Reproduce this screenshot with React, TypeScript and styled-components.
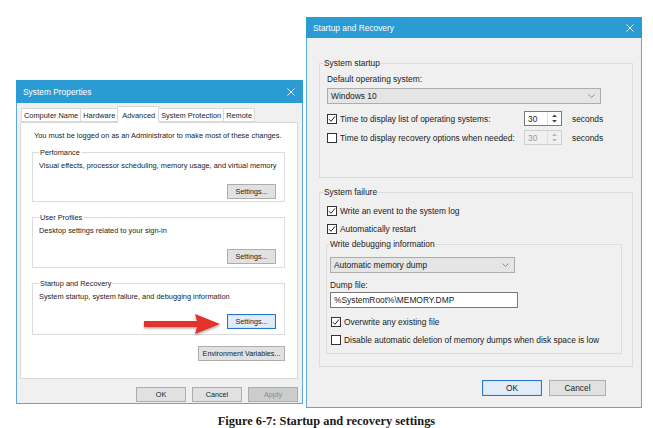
import { createGlobalStyle, styled } from 'styled-components';

const GlobalStyle = createGlobalStyle`
  html, body {
    margin: 0;
    padding: 0;
    background: #fff;
  }
  #root {
    width: 653px;
    height: 428px;
    overflow: hidden;
  }
`;

const Page = styled.div`
  width: 653px;
  height: 428px;
  display: flex;
  flex-direction: column;
  font-family: 'Liberation Sans', Arial, sans-serif;
  color: #1b1b1b;
`;

const Windows = styled.div`
  display: flex;
  align-items: flex-start;
  gap: 3px;
  padding: 17px 0 0 16px;
  height: 392px;
`;

const Window = styled.div<{ $w: number; $h: number; $top?: number }>`
  position: relative;
  box-sizing: border-box;
  width: ${(p) => p.$w}px;
  height: ${(p) => p.$h}px;
  margin-top: ${(p) => p.$top ?? 0}px;
  border: 1px solid #5aa9dc;
  border-top: none;
  background: #f0f0f0;
  display: flex;
  flex-direction: column;
`;

const TitleBar = styled.div<{ $h: number }>`
  height: ${(p) => p.$h}px;
  flex: none;
  margin: 0 -1px;
  background: #2a9bd3;
  color: #fff;
  display: flex;
  align-items: center;
  justify-content: space-between;
  padding: 0 8px 0 7px;
  font-size: 8.4px;
`;

const CloseIcon = () => (
  <svg width="8" height="8" viewBox="0 0 8 8">
    <path d="M0.5 0.5 L7.5 7.5 M7.5 0.5 L0.5 7.5" stroke="#fff" strokeWidth="1" />
  </svg>
);

/* ---------- left dialog ---------- */

const LeftBody = styled.div`
  flex: 1;
  display: flex;
  flex-direction: column;
  padding: 2px 4px 0 3px;
  font-size: 7.4px;
`;

const TabStrip = styled.div`
  display: flex;
  align-items: flex-end;
  height: 17px;
  padding-left: 1px;
  position: relative;
  z-index: 1;
`;

const Tab = styled.div<{ $active?: boolean }>`
  height: ${(p) => (p.$active ? 17 : 14)}px;
  box-sizing: border-box;
  padding: 0 ${(p) => (p.$active ? 4 : 2)}px;
  margin: 0 ${(p) => (p.$active ? -1 : 0)}px ${(p) => (p.$active ? -1 : 0)}px;
  border: 1px solid #d9d9d9;
  border-bottom: ${(p) => (p.$active ? 'none' : '1px solid #d9d9d9')};
  margin-left: -1px;
  background: #fff;
  display: flex;
  align-items: center;
  white-space: nowrap;
  color: #222;
  &:first-child {
    margin-left: 0;
  }
`;

const TabPanel = styled.div`
  height: 257px;
  box-sizing: border-box;
  background: #fff;
  border: 1px solid #d9d9d9;
  padding: 0 12px 0 11px;
  display: flex;
  flex-direction: column;
  position: relative;
`;

const Note = styled.div`
  margin: 8px 0 8px 2px;
  line-height: 9px;
  white-space: nowrap;
`;

const Group = styled.fieldset<{ $h: number; $mt?: number }>`
  box-sizing: border-box;
  height: ${(p) => p.$h}px;
  margin: ${(p) => p.$mt ?? 0}px 0 0;
  padding: 4px 8px 0 6px;
  border: 1px solid #dcdcdc;
  min-width: 0;
  display: flex;
  flex-direction: column;
`;

const Legend = styled.legend`
  padding: 0 1px;
  line-height: 9px;
  color: #222;
`;

const Desc = styled.div`
  line-height: 9px;
  white-space: nowrap;
`;

const ButtonRow = styled.div<{ $mt?: number }>`
  display: flex;
  justify-content: flex-end;
  gap: 6px;
  margin-top: ${(p) => p.$mt ?? 0}px;
`;

const Button = styled.div<{ $w: number; $h?: number; $focus?: boolean; $disabled?: boolean; $fs?: number }>`
  width: ${(p) => p.$w}px;
  height: ${(p) => p.$h ?? 15}px;
  box-sizing: border-box;
  border: 1px solid ${(p) => (p.$focus ? '#2a74c9' : '#adadad')};
  box-shadow: ${(p) => (p.$focus ? 'inset 0 0 0 1px #cfe3f7' : 'none')};
  background: ${(p) => (p.$disabled ? '#cccccc' : p.$focus ? '#e1ecf8' : '#e1e1e1')};
  color: ${(p) => (p.$disabled ? '#8a8a8a' : '#1b1b1b')};
  font-size: ${(p) => p.$fs ?? 7.2}px;
  display: flex;
  align-items: center;
  justify-content: center;
  white-space: nowrap;
`;

const BottomRow = styled.div`
  display: flex;
  justify-content: flex-end;
  gap: 6px;
  margin-top: 8px;
`;

const ArrowMark = styled.svg`
  position: absolute;
  left: 121px;
  top: 189px;
`;

const RedArrow = () => (
  <ArrowMark width="82" height="24" viewBox="0 0 82 24">
    <defs>
      <filter id="sh" x="-10%" y="-30%" width="120%" height="160%">
        <feDropShadow dx="0" dy="1.5" stdDeviation="1.2" floodColor="#000" floodOpacity="0.35" />
      </filter>
    </defs>
    <path
      d="M2 9 L55 9 L53 2 L78 12 L53 22 L55 15 L2 15 Z"
      fill="#e3302b"
      filter="url(#sh)"
    />
  </ArrowMark>
);

/* ---------- right dialog ---------- */

const RightBody = styled.div`
  flex: 1;
  display: flex;
  flex-direction: column;
  padding: 20px 8px 0 12px;
  font-size: 8.4px;
`;

const RGroup = styled.fieldset<{ $h: number; $mt?: number; $w?: number; $ml?: number; $pl?: number }>`
  box-sizing: border-box;
  height: ${(p) => p.$h}px;
  width: ${(p) => (p.$w ? `${p.$w}px` : 'auto')};
  margin: ${(p) => p.$mt ?? 0}px 0 0 ${(p) => p.$ml ?? 0}px;
  padding: 0 6px 0 ${(p) => p.$pl ?? 7}px;
  border: 1px solid #dcdcdc;
  min-width: 0;
  display: flex;
  flex-direction: column;
`;

const RLegend = styled.legend<{ $ml?: number }>`
  padding: 0 1px 0 0;
  margin-left: ${(p) => p.$ml ?? -3}px;
  line-height: 10px;
  color: #222;
`;

const Label = styled.div<{ $mt?: number }>`
  line-height: 10px;
  margin-top: ${(p) => p.$mt ?? 0}px;
  white-space: nowrap;
`;

const Select = styled.div<{ $w: number; $mt?: number }>`
  width: ${(p) => p.$w}px;
  height: 16px;
  box-sizing: border-box;
  margin-top: ${(p) => p.$mt ?? 0}px;
  border: 1px solid #adadad;
  background: #e5e5e5;
  display: flex;
  align-items: center;
  justify-content: space-between;
  padding: 0 5px 0 3px;
`;

const Chevron = () => (
  <svg width="7" height="4" viewBox="0 0 7 4">
    <path d="M0.5 0.5 L3.5 3.5 L6.5 0.5" stroke="#8a8a8a" fill="none" strokeWidth="1" />
  </svg>
);

const CheckRow = styled.div<{ $mt?: number; $ml?: number }>`
  display: flex;
  align-items: center;
  gap: 3px;
  height: 15px;
  margin: ${(p) => p.$mt ?? 0}px 0 0 ${(p) => p.$ml ?? 0}px;
  white-space: nowrap;
`;

const Box = styled.span`
  width: 10px;
  height: 10px;
  box-sizing: border-box;
  border: 1px solid #333;
  background: #fff;
  flex: none;
  display: flex;
  align-items: center;
  justify-content: center;
`;

const Check = ({ on }: { on?: boolean }) => (
  <Box>
    {on && (
      <svg width="8" height="8" viewBox="0 0 8 8">
        <path d="M1 4.2 L3 6.3 L7 1.4" stroke="#222" strokeWidth="1" fill="none" />
      </svg>
    )}
  </Box>
);

const SpinLabel = styled.span`
  flex: 1;
`;

const Spinner = styled.div<{ $disabled?: boolean }>`
  display: flex;
  align-items: stretch;
  width: 38px;
  height: 15px;
  box-sizing: border-box;
  border: 1px solid ${(p) => (p.$disabled ? '#cfcfcf' : '#7a7a7a')};
  background: ${(p) => (p.$disabled ? '#f0f0f0' : '#fff')};
  color: ${(p) => (p.$disabled ? '#9a9a9a' : '#1b1b1b')};
  margin-right: 7px;
`;

const SpinValue = styled.span`
  flex: 1;
  display: flex;
  align-items: center;
  padding-left: 3px;
`;

const SpinArrows = styled.span`
  width: 13px;
  border-left: 1px solid #e0e0e0;
  display: flex;
  flex-direction: column;
  align-items: center;
  justify-content: center;
`;

const SpinArrowsIcon = ({ color }: { color: string }) => (
  <svg width="5" height="9" viewBox="0 0 5 9">
    <path d="M0 3 L2.5 0.5 L5 3 Z M0 6 L2.5 8.5 L5 6 Z" fill={color} />
  </svg>
);

const Seconds = styled.span`
  width: 54px;
`;

const TextInput = styled.div<{ $w: number }>`
  width: ${(p) => p.$w}px;
  height: 16px;
  box-sizing: border-box;
  border: 1px solid #7a7a7a;
  background: #fff;
  display: flex;
  align-items: center;
  padding-left: 3px;
  margin-top: 2px;
`;

const RButtons = styled.div`
  display: flex;
  justify-content: flex-end;
  gap: 7px;
  margin: 13px 27px 0 0;
`;

const Caption = styled.div`
  margin-top: 7px;
  text-align: center;
  font-family: 'Liberation Serif', 'DejaVu Serif', serif;
  font-weight: bold;
  font-size: 12.4px;
  line-height: 13px;
  color: #1a1a1a;
`;

const App = () => (
  <>
    <GlobalStyle />
    <Page>
      <Windows>
        <Window $w={287} $h={324} $top={63}>
          <TitleBar $h={23}>
            <span>System Properties</span>
            <CloseIcon />
          </TitleBar>
          <LeftBody>
            <TabStrip>
              <Tab>Computer Name</Tab>
              <Tab>Hardware</Tab>
              <Tab $active>Advanced</Tab>
              <Tab>System Protection</Tab>
              <Tab>Remote</Tab>
            </TabStrip>
            <TabPanel>
              <Note>You must be logged on as an Administrator to make most of these changes.</Note>
              <Group $h={54}>
                <Legend>Perfomance</Legend>
                <Desc>Visual effects, processor scheduling, memory usage, and virtual memory</Desc>
                <ButtonRow $mt={14}>
                  <Button $w={49}>Settings...</Button>
                </ButtonRow>
              </Group>
              <Group $h={55} $mt={11}>
                <Legend>User Profiles</Legend>
                <Desc>Desktop settings related to your sign-in</Desc>
                <ButtonRow $mt={14}>
                  <Button $w={49}>Settings...</Button>
                </ButtonRow>
              </Group>
              <Group $h={56} $mt={11}>
                <Legend>Startup and Recovery</Legend>
                <Desc>System startup, system failure, and debugging information</Desc>
                <ButtonRow $mt={13}>
                  <Button $w={49} $focus>Settings...</Button>
                </ButtonRow>
              </Group>
              <ButtonRow $mt={11}>
                <Button $w={87}>Environment Variables...</Button>
              </ButtonRow>
              <RedArrow />
            </TabPanel>
            <BottomRow>
              <Button $w={50}>OK</Button>
              <Button $w={50}>Cancel</Button>
              <Button $w={50} $disabled>Apply</Button>
            </BottomRow>
          </LeftBody>
        </Window>

        <Window $w={336} $h={391}>
          <TitleBar $h={21}>
            <span>Startup and Recovery</span>
            <CloseIcon />
          </TitleBar>
          <RightBody>
            <RGroup $h={120}>
              <RLegend>System startup</RLegend>
              <Label $mt={6}>Default operating system:</Label>
              <Select $w={274} $mt={4}>
                <span>Windows 10</span>
                <Chevron />
              </Select>
              <CheckRow $mt={7}>
                <Check on />
                <SpinLabel>Time to display list of operating systems:</SpinLabel>
                <Spinner>
                  <SpinValue>30</SpinValue>
                  <SpinArrows>
                    <SpinArrowsIcon color="#444" />
                  </SpinArrows>
                </Spinner>
                <Seconds>seconds</Seconds>
              </CheckRow>
              <CheckRow $mt={4}>
                <Check />
                <SpinLabel>Time to display recovery options when needed:</SpinLabel>
                <Spinner $disabled>
                  <SpinValue>30</SpinValue>
                  <SpinArrows>
                    <SpinArrowsIcon color="#b5b5b5" />
                  </SpinArrows>
                </Spinner>
                <Seconds>seconds</Seconds>
              </CheckRow>
            </RGroup>

            <RGroup $h={180} $mt={9}>
              <RLegend>System failure</RLegend>
              <CheckRow $mt={6}>
                <Check on />
                <span>Write an event to the system log</span>
              </CheckRow>
              <CheckRow $mt={3}>
                <Check on />
                <span>Automatically restart</span>
              </CheckRow>
              <RGroup $h={115} $mt={3} $w={296} $ml={-1} $pl={3}>
                <RLegend $ml={0}>Write debugging information</RLegend>
                <Select $w={185} $mt={8}>
                  <span>Automatic memory dump</span>
                  <Chevron />
                </Select>
                <Label $mt={7}>Dump file:</Label>
                <TextInput $w={188}>%SystemRoot%\MEMORY.DMP</TextInput>
                <CheckRow $mt={6} $ml={1}>
                  <Check on />
                  <span>Overwrite any existing file</span>
                </CheckRow>
                <CheckRow $mt={3} $ml={1}>
                  <Check />
                  <span>Disable automatic deletion of memory dumps when disk space is low</span>
                </CheckRow>
              </RGroup>
            </RGroup>

            <RButtons>
              <Button $w={60} $h={16} $fs={8.4} $focus>OK</Button>
              <Button $w={57} $h={16} $fs={8.4}>Cancel</Button>
            </RButtons>
          </RightBody>
        </Window>
      </Windows>
      <Caption>Figure 6-7: Startup and recovery settings</Caption>
    </Page>
  </>
);

export default App;
